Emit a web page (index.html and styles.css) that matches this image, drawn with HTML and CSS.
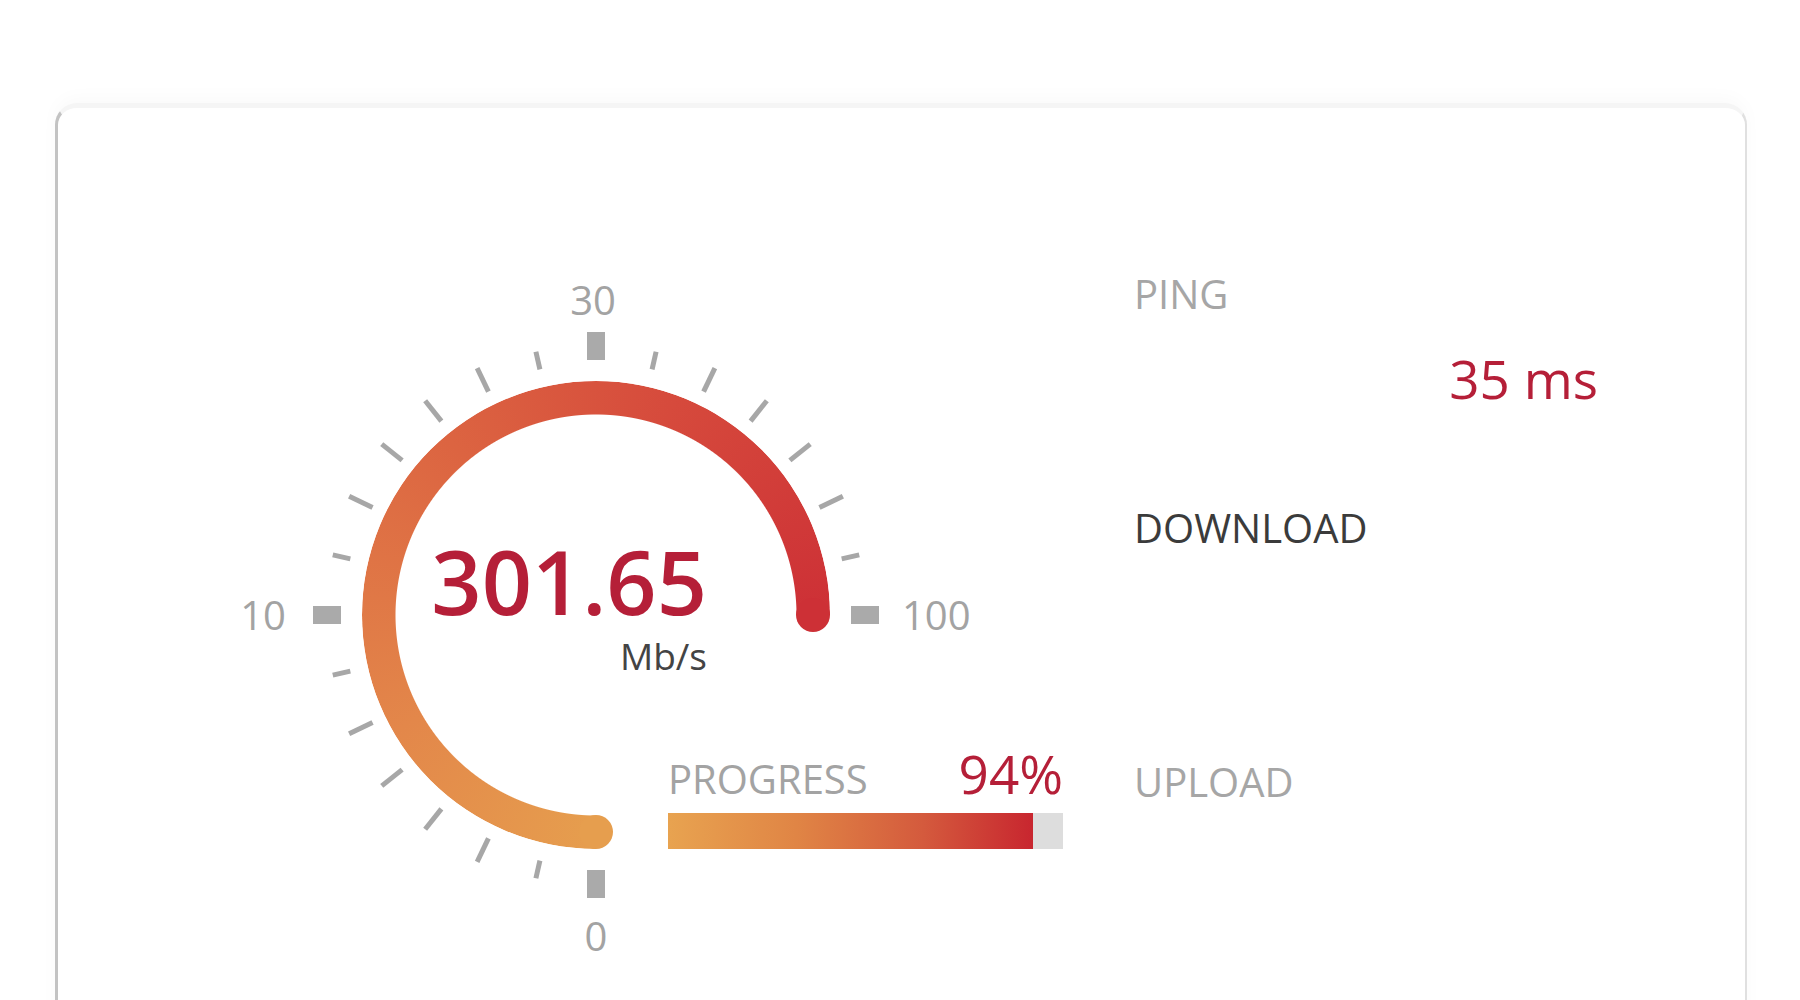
FILE: index.html
```html
<!DOCTYPE html>
<html lang="en">
  <head>
    <title>Speed Test</title>
    <meta charset="utf-8" />
    <link rel="stylesheet" href="styles.css">
  </head>
  <body>
    <div class="card">
      <div class="test">
        <div class="gauge">
          <div class="ring"></div>
          <span class="cap cap-start"></span>
          <span class="cap cap-end"></span>

          <svg class="scale" viewBox="0 0 800 720" width="800" height="720">
            <defs>
              <line id="tick-long" x1="400" y1="598" x2="400" y2="624" />
              <line id="tick-short" x1="400" y1="602" x2="400" y2="620" />
              <rect id="tick-major" x="391" y="605" width="18" height="28" />
            </defs>

            <!-- minor ticks, 7 steps per quarter -->
            <g class="ticks-minor">
              <use href="#tick-short" transform="rotate(12.86 400 350)" />
              <use href="#tick-long" transform="rotate(25.71 400 350)" />
              <use href="#tick-long" transform="rotate(38.57 400 350)" />
              <use href="#tick-long" transform="rotate(51.43 400 350)" />
              <use href="#tick-long" transform="rotate(64.29 400 350)" />
              <use href="#tick-short" transform="rotate(77.14 400 350)" />
              <use href="#tick-short" transform="rotate(102.86 400 350)" />
              <use href="#tick-long" transform="rotate(115.71 400 350)" />
              <use href="#tick-long" transform="rotate(128.57 400 350)" />
              <use href="#tick-long" transform="rotate(141.43 400 350)" />
              <use href="#tick-long" transform="rotate(154.29 400 350)" />
              <use href="#tick-short" transform="rotate(167.14 400 350)" />
              <use href="#tick-short" transform="rotate(192.86 400 350)" />
              <use href="#tick-long" transform="rotate(205.71 400 350)" />
              <use href="#tick-long" transform="rotate(218.57 400 350)" />
              <use href="#tick-long" transform="rotate(231.43 400 350)" />
              <use href="#tick-long" transform="rotate(244.29 400 350)" />
              <use href="#tick-short" transform="rotate(257.14 400 350)" />
            </g>

            <g class="ticks-major">
              <use href="#tick-major" />
              <use href="#tick-major" transform="rotate(90 400 350)" />
              <use href="#tick-major" transform="rotate(180 400 350)" />
              <use href="#tick-major" transform="rotate(270 400 350)" />
            </g>

            <g class="scale-labels">
              <text x="400" y="686" text-anchor="middle">0</text>
              <text x="90" y="365" text-anchor="end">10</text>
              <text x="397" y="50" text-anchor="middle">30</text>
              <text x="706" y="365">100</text>
            </g>
          </svg>

          <div class="reading">
            <div class="reading-value">301.65</div>
            <div class="reading-unit">Mb/s</div>
          </div>

          <div class="progress">
            <div class="progress-head">
              <span class="progress-label">PROGRESS</span>
              <span class="progress-value">94%</span>
            </div>
            <div class="progress-track">
              <div class="progress-fill" style="width: 92.5%"></div>
            </div>
          </div>
        </div>

        <div class="stats">
          <div class="stat stat-ping">
            <div class="stat-label">PING</div>
            <div class="stat-value">35 ms</div>
          </div>
          <div class="stat stat-download active">
            <div class="stat-label">DOWNLOAD</div>
            <div class="stat-value"></div>
          </div>
          <div class="stat stat-upload">
            <div class="stat-label">UPLOAD</div>
            <div class="stat-value"></div>
          </div>
        </div>
      </div>
    </div>
  </body>
</html>
```

FILE: styles.css
```css
 html,
 body {
   margin: 0;
   background: #fff;
   overflow: hidden;
   font-family: "Open Sans", "Noto Sans", sans-serif;
 }

 .card {
   box-sizing: border-box;
   width: 1692px;
   height: 960px;
   margin: 103px 0 0 55px;
   background: #fff;
   border-top: 5px solid #f5f5f5;
   border-left: 3px solid #c3c3c3;
   border-right: 2px solid #e0e0e0;
   border-radius: 22px 22px 0 0;
   box-shadow: 0 -6px 18px rgba(0, 0, 0, 0.025);
 }

 .test {
   display: flex;
   align-items: flex-start;
   padding: 157px 0 0 138px;
 }

 /* gauge */

 .gauge {
   position: relative;
   width: 800px;
   height: 720px;
   flex: none;
 }

 .ring {
   position: absolute;
   left: 166px;
   top: 116px;
   width: 468px;
   height: 468px;
   border-radius: 50%;
   background: conic-gradient(from 180deg, #e69e4e 0deg, #e3874a 60deg, #dc6441 140deg, #d64a3c 200deg, #cd3036 270deg, transparent 270deg);
   -webkit-mask: radial-gradient(closest-side, transparent calc(100% - 34px), #000 calc(100% - 33px));
   mask: radial-gradient(closest-side, transparent calc(100% - 34px), #000 calc(100% - 33px));
 }

 .cap {
   position: absolute;
   width: 34px;
   height: 34px;
   border-radius: 50%;
 }

 .cap-start {
   left: 383px;
   top: 550px;
   background: #e69e4e;
 }

 .cap-end {
   left: 600px;
   top: 333px;
   background: #cd3036;
 }

 .scale {
   position: absolute;
   left: 0;
   top: 0;
 }

 .ticks-minor {
   stroke: #a7a7a7;
   stroke-width: 5;
 }

 .ticks-major {
   fill: #aaaaaa;
 }

 .scale-labels {
   fill: #a3a3a3;
   font-family: "Open Sans", sans-serif;
   font-size: 40px;
 }

 .reading {
   position: absolute;
   right: 289px;
   top: 272px;
   text-align: right;
 }

 .reading-value {
   font-size: 88px;
   line-height: 1;
   font-weight: 600;
   color: #b51f38;
 }

 .reading-unit {
   margin-top: 12px;
   font-size: 37px;
   line-height: 1;
   font-weight: 500;
   color: #444;
 }

 .progress {
   position: absolute;
   left: 472px;
   top: 482px;
   width: 395px;
 }

 .progress-head {
   display: flex;
   justify-content: space-between;
   align-items: baseline;
   line-height: 1;
 }

 .progress-label {
   font-size: 40px;
   font-weight: 500;
   color: #a3a3a3;
 }

 .progress-value {
   font-size: 53px;
   font-weight: 500;
   color: #b51f38;
 }

 .progress-track {
   height: 36px;
   margin-top: 13px;
   background: #dddddd;
 }

 .progress-fill {
   height: 100%;
   background: linear-gradient(to right, #e8a350, #e08545 35%, #d45a3d 70%, #c8262f);
 }

 /* stats column */

 .stats {
   width: 464px;
   margin-left: 138px;
   padding-top: 9px;
 }

 .stat {
   height: 234px;
 }

 .stat-download {
   height: 254px;
 }

 .stat-label {
   font-size: 40px;
   line-height: 1;
   font-weight: 500;
   color: #a6a6a6;
 }

 .stat.active .stat-label {
   color: #3b3b3b;
 }

 .stat-value {
   margin-top: 38px;
   height: 52px;
   font-size: 53px;
   line-height: 1;
   font-weight: 500;
   text-align: right;
   color: #b51f38;
 }
```
